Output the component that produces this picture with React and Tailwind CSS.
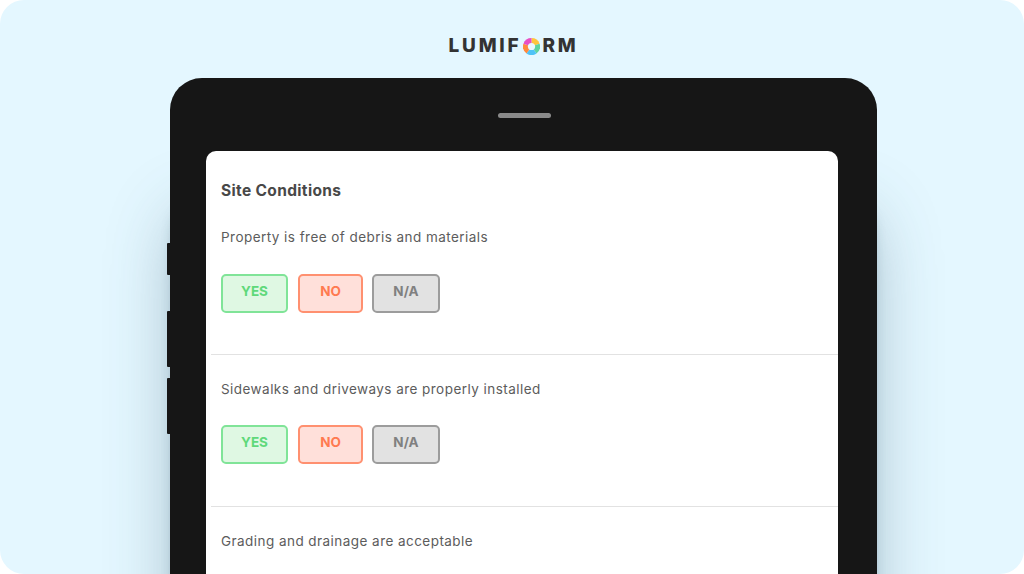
import React from "react";

const Answers = ({ top = "mt-[23px]" }) => (
  <div className={`flex ${top}`}>
    <button className="h-[39px] w-[67px] rounded-[5px] border-2 border-[#80e498] bg-[#dff8e3] pb-[4px] text-[13.5px] font-bold text-[#5ed97a]">YES</button>
    <button className="ml-[10px] h-[39px] w-[65px] rounded-[5px] border-2 border-[#ff9070] bg-[#ffe0da] pb-[4px] text-[13.5px] font-bold text-[#ff7a50]">NO</button>
    <button className="ml-[9px] h-[39px] w-[68px] rounded-[5px] border-2 border-[#9c9c9c] bg-[#e2e2e2] pb-[4px] text-[13.5px] font-bold text-[#808080]">N/A</button>
  </div>
);

const Question = ({ children }) => (
  <p className="text-[13.5px] leading-[20px] tracking-[0.45px] text-[#5c5c5c]">{children}</p>
);

const LogoMark = () => (
  <svg viewBox="0 0 16 16" className="mx-[2px] h-[17px] w-[17px]">
    <path d="M8 0A8 8 0 0 1 15.6 5.5L8 8Z" fill="#ffc53d" />
    <path d="M15.6 5.5A8 8 0 0 1 12.7 14.5L8 8Z" fill="#5fd4a0" />
    <path d="M12.7 14.5A8 8 0 0 1 3.3 14.5L8 8Z" fill="#4fc3f7" />
    <path d="M3.3 14.5A8 8 0 0 1 .4 5.5L8 8Z" fill="#ff8a3d" />
    <path d="M.4 5.5A8 8 0 0 1 8 0L8 8Z" fill="#e84fc4" />
    <circle cx="8" cy="8" r="3.4" fill="#e8f8ff" />
  </svg>
);

export default function App() {
  return (
    <div className="h-[574px] w-[1024px] overflow-hidden bg-white font-['Inter',sans-serif]">
      <div className="h-full overflow-hidden rounded-[24px] bg-[#e4f7ff]">
        <header className="flex h-[78px] items-center justify-center pl-[3px] pt-[14px]">
          <div className="flex items-center text-[19px] font-extrabold tracking-[2.75px] text-[#333333]">
            LUMIF<LogoMark />RM
          </div>
        </header>

        <div className="relative ml-[170px] h-[600px] w-[707px] rounded-t-[32px] bg-[#161616] pl-[36px] pr-[39px] pt-[73px] shadow-[0_130px_70px_-10px_rgba(50,85,105,0.42),0_120px_14px_-6px_rgba(50,85,105,0.4)]">
          <div className="absolute left-[328px] top-[35px] h-[5px] w-[53px] rounded-full bg-[#8a8a8a]" />
          <div className="absolute -left-[3px] top-[165px] h-[32px] w-[3px] rounded-l-[1px] bg-[#161616]" />
          <div className="absolute -left-[3px] top-[233px] h-[56px] w-[3px] rounded-l-[1px] bg-[#161616]" />
          <div className="absolute -left-[3px] top-[300px] h-[56px] w-[3px] rounded-l-[1px] bg-[#161616]" />

          <div className="h-full rounded-t-[10px] bg-white">
            <section className="px-[15px] pb-[41px] pt-[30px]">
              <h2 className="text-[15.5px] font-bold leading-[20px] tracking-[0.35px] text-[#484848]">Site Conditions</h2>
              <div className="mt-[26px]"><Question>Property is free of debris and materials</Question></div>
              <Answers top="mt-[27px]" />
            </section>
            <div className="ml-[5px] h-[1px] bg-[#e2e2e2]" />
            <section className="px-[15px] pb-[42px] pt-[24px]">
              <Question>Sidewalks and driveways are properly installed</Question>
              <Answers top="mt-[26px]" />
            </section>
            <div className="ml-[5px] h-[1px] bg-[#e2e2e2]" />
            <section className="px-[15px] pt-[24px]">
              <Question>Grading and drainage are acceptable</Question>
            </section>
          </div>
        </div>
      </div>
    </div>
  );
}
